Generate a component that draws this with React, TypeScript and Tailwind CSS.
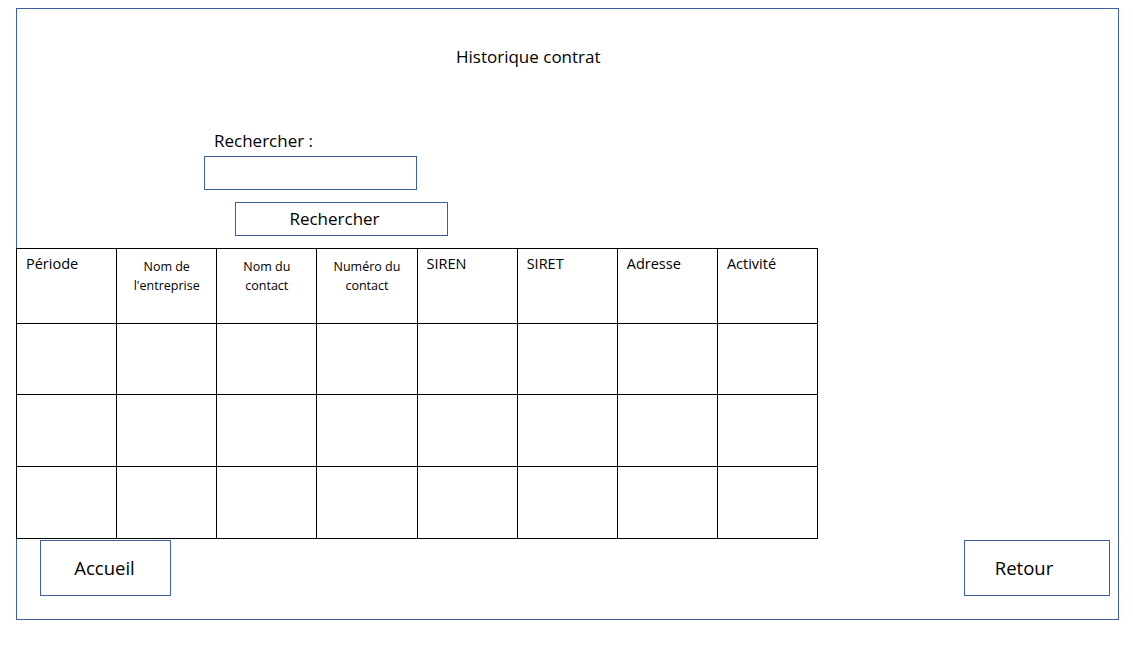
const columns: { label: string[]; small?: boolean }[] = [
  { label: ['Période'] },
  { label: ['Nom de', "l'entreprise"], small: true },
  { label: ['Nom du', 'contact'], small: true },
  { label: ['Numéro du', 'contact'], small: true },
  { label: ['SIREN'] },
  { label: ['SIRET'] },
  { label: ['Adresse'] },
  { label: ['Activité'] },
];

const rowHeights = ['h-[71px]', 'h-[72px]', 'h-[72px]'];

export default function App() {
  return (
    <div className="min-h-screen bg-white pl-[16px] pt-[8px] text-black [font-family:'Open_Sans',sans-serif]">
      <div className="w-[1103px] h-[612px] border border-[#3f60a0] flex flex-col">
        <h1 className="mt-[38px] pl-[439px] text-[17px] leading-[20px] font-normal">Historique contrat</h1>

        <div className="mt-[63px] pl-[197px] text-[17px] leading-[22px]">Rechercher :</div>
        <input
          type="text"
          className="mt-[4px] ml-[187px] w-[213px] h-[34px] border border-[#3f60a0] outline-none"
        />
        <button className="mt-[12px] ml-[218px] w-[213px] h-[34px] border border-[#3f60a0] text-[17px] text-center pr-[14px]">
          Rechercher
        </button>

        <table className="mt-[12px] -ml-px border-collapse table-fixed w-[802px]">
          <thead>
            <tr className="h-[75px]">
              {columns.map((c) => (
                <th
                  key={c.label.join(' ')}
                  className={
                    c.small
                      ? 'w-[100px] border border-black align-top font-normal text-[12.5px] leading-[19px] pt-[8px] text-center'
                      : 'w-[100px] border border-black align-top font-normal text-[14.5px] leading-[20px] pt-[5px] pl-[9px] text-left'
                  }
                >
                  {c.label.map((l) => (
                    <div key={l}>{l}</div>
                  ))}
                </th>
              ))}
            </tr>
          </thead>
          <tbody>
            {rowHeights.map((h, i) => (
              <tr key={i} className={h}>
                {columns.map((c) => (
                  <td key={c.label.join(' ')} className="border border-black" />
                ))}
              </tr>
            ))}
          </tbody>
        </table>

        <div className="mt-[1px] flex justify-between pl-[23px] pr-[8px]">
          <button className="w-[131px] h-[56px] border border-[#3f60a0] text-[18.5px] pr-[2px]">Accueil</button>
          <button className="w-[146px] h-[56px] border border-[#3f60a0] text-[18.5px] pr-[26px]">Retour</button>
        </div>
      </div>
    </div>
  );
}
